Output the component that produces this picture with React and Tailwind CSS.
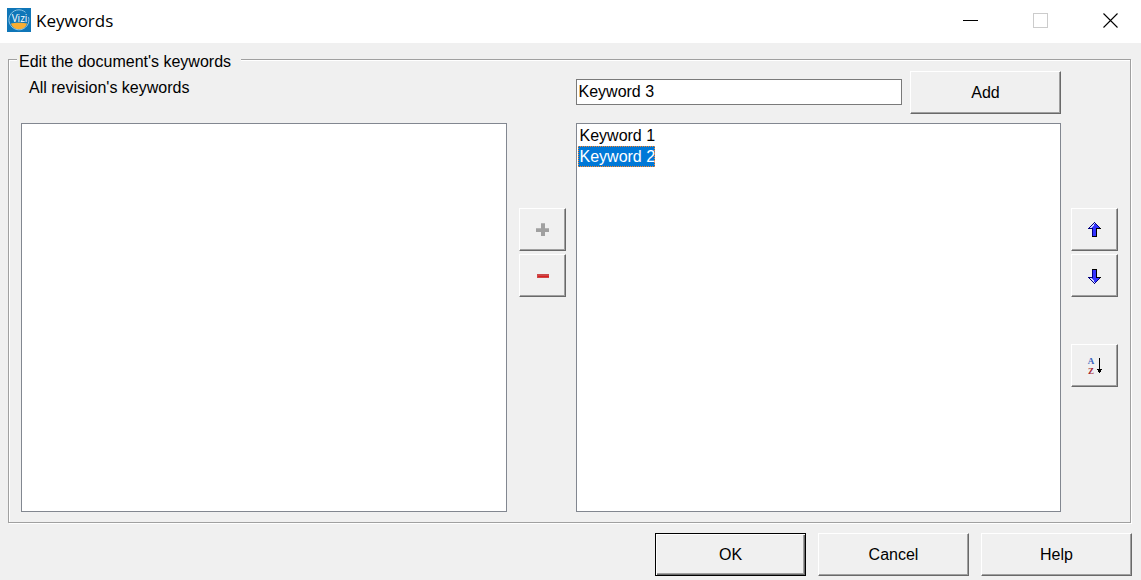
import React, { useState } from 'react';
import clsx from 'clsx';

const AppLogo = () => (
  <svg className="w-6 h-6 shrink-0" viewBox="0 0 24 24" aria-hidden="true">
    <rect width="24" height="24" fill="#0f76b8" />
    <path d="M4 15.500C7 14.600 17 14.600 20 15.500C18.800 19.500 15.500 21.500 12.300 21.500C8.500 21.500 5.200 19.500 4 15.500Z" fill="#f9ae33" />
    <path d="M21.500 9A10 10 0 1 1 18.500 4.300" fill="none" stroke="#8cc4e4" strokeWidth="1" />
    <text x="12.500" y="13.500" textAnchor="middle" fontSize="10" fill="#fff" fontFamily="Open Sans, sans-serif">Vizi</text>
  </svg>
);

const MinimizeIcon = () => (
  <svg className="w-4 h-4" viewBox="0 0 16 16" shapeRendering="crispEdges" aria-hidden="true">
    <rect x="0" y="8" width="15" height="1" fill="#000" />
  </svg>
);

const MaximizeIcon = () => (
  <svg className="w-4 h-4" viewBox="0 0 16 16" shapeRendering="crispEdges" aria-hidden="true">
    <rect x="0.5" y="1.5" width="14" height="14" fill="none" stroke="#ccc" />
  </svg>
);

const CloseIcon = () => (
  <svg className="w-4 h-4" viewBox="0 0 16 16" aria-hidden="true">
    <path d="M0.500 1.500L14.500 15.500M14.500 1.500L0.500 15.500" stroke="#000" strokeWidth="1.100" />
  </svg>
);

const PlusIcon = () => (
  <svg className="w-4 h-4" viewBox="0 0 16 16" shapeRendering="crispEdges" aria-hidden="true">
    <path d="M7 1h4v5h4v4h-4v4H7v-4H2V6h5z" fill="#a0a0a0" />
    <path d="M7 1h4v1H7zM2 6h5v1H2zM11 6h4v1h-4z" fill="#b4b4b4" />
  </svg>
);

const MinusIcon = () => (
  <svg className="w-4 h-4" viewBox="0 0 16 16" shapeRendering="crispEdges" aria-hidden="true">
    <rect x="3" y="6" width="12" height="4" fill="#cc4848" />
    <rect x="4" y="8" width="11" height="1" fill="#dc1f1f" />
  </svg>
);

const ArrowIcon = ({ className }) => (
  <svg className={clsx('w-4 h-4', className)} viewBox="0 0 16 16" shapeRendering="crispEdges" aria-hidden="true">
    <path d="M7 0h1v1h1v1h1v1h1v1h1v1h1v1h1v1h-4v8H5V7H1V6h1V5h1V4h1V3h1V2h1V1h1z" fill="#000080" />
    <path d="M9 6h5v1h-4v8H5v-1h4z" fill="#000" />
    <path d="M7 1h1v1h1v1h1v1h1v1h1v1H9v8H6V6H3V5h1V4h1V3h1V2h1z" fill="#3333ff" />
    <path d="M7 1h1v1H7zM6 2h1v1H6zM5 3h2v1H5zM4 4h2v1H4zM3 5h2v1H3z" fill="#d0d8ff" />
  </svg>
);

const SortIcon = () => (
  <svg className="w-4 h-5" viewBox="0 0 16 20" aria-hidden="true">
    <text x="4" y="8" textAnchor="middle" fontSize="9" fontWeight="700" fill="#3b62bd" fontFamily="Liberation Serif, serif">A</text>
    <text x="4" y="18" textAnchor="middle" fontSize="9" fontWeight="700" fill="#a52a35" fontFamily="Liberation Serif, serif">Z</text>
    <path d="M12 2h1v11h2v1h-1v2h-1v1h-1v-1h-1v-2h-1v-1h2z" fill="#000" shapeRendering="crispEdges" />
  </svg>
);

const Button = ({ primary, className, children, ...props }) => (
  <button
    type="button"
    className={clsx(
      'flex items-center justify-center h-[43px] shrink-0 border bg-[#f0f0f0]',
      primary
        ? 'border-black shadow-[inset_1px_1px_0_#fff,inset_-1px_-1px_0_#696969,inset_-2px_-2px_0_#a0a0a0]'
        : 'border-t-white border-l-white border-r-[#696969] border-b-[#696969] shadow-[inset_-1px_-1px_0_#a0a0a0]',
      className
    )}
    {...props}
  >
    {children}
  </button>
);

const ListBox = ({ label, labelledBy, items, selected, onSelect }) => (
  <ul
    role="listbox"
    aria-label={label}
    aria-labelledby={labelledBy}
    className="flex flex-col items-start min-h-[389px] p-px border border-[#828790] bg-white"
  >
    {items.map((item) => (
      <li
        key={item}
        role="option"
        aria-selected={item === selected}
        onClick={() => onSelect(item)}
        className={clsx(
          'pl-0.5 leading-[21px] cursor-default',
          item === selected && 'bg-[#0078d7] text-white outline-1 -outline-offset-1 outline-dotted outline-[#ff8728]'
        )}
      >
        {item}
      </li>
    ))}
  </ul>
);

const App = () => {
  const [keyword, setKeyword] = useState('Keyword 3');
  const [keywords, setKeywords] = useState(['Keyword 1', 'Keyword 2']);
  const [selected, setSelected] = useState('Keyword 2');

  const addKeyword = () => {
    if (keyword && !keywords.includes(keyword)) {
      setKeywords([...keywords, keyword]);
    }
  };

  const removeKeyword = () => setKeywords(keywords.filter((k) => k !== selected));

  const moveKeyword = (step) => {
    const from = keywords.indexOf(selected);
    const to = from + step;
    if (from < 0 || to < 0 || to >= keywords.length) return;
    const next = [...keywords];
    [next[from], next[to]] = [next[to], next[from]];
    setKeywords(next);
  };

  return (
    <div className="min-h-screen bg-[#f0f0f0] text-black text-base font-['Liberation_Sans',Arial,sans-serif]">
      {/* Title bar */}
      <header className="flex items-center h-[43px] pl-[7px] pr-[22px] pb-[3px] bg-white">
        <AppLogo />
        <h1 className="ml-[5px] pt-0.5 text-[17px] leading-6 font-['Open_Sans',sans-serif]">Keywords</h1>
        <div className="flex gap-[54px] ml-auto">
          <button type="button" aria-label="Minimize"><MinimizeIcon /></button>
          <button type="button" aria-label="Maximize" disabled><MaximizeIcon /></button>
          <button type="button" aria-label="Close"><CloseIcon /></button>
        </div>
      </header>

      <main className="px-2 pt-1 pb-1">
        <fieldset className="min-w-0 mr-0.5 px-3 pb-2.5 border border-[#a0a0a0] shadow-[1px_1px_0_#fff,inset_1px_1px_0_#fff]">
          <legend className="-ml-1 pt-1.5 pl-0.5 pr-2.5 leading-[18px] bg-[#f0f0f0]">Edit the document's keywords</legend>

          <div className="grid grid-cols-[1fr_49px_1fr_47px] gap-x-2.5 gap-y-[9px]">
            <div id="revision-keywords" className="col-span-2 pl-2 pt-2 leading-[18px]">All revision's keywords</div>
            <div className="flex items-start gap-2">
              <input
                type="text"
                aria-label="Keyword"
                value={keyword}
                onChange={(e) => setKeyword(e.target.value)}
                className="grow min-w-0 h-[26px] mt-2 px-0.5 border border-[#7a7a7a] bg-white outline-none"
              />
              <Button className="w-[151px]" onClick={addKeyword}>Add</Button>
            </div>
            <div />

            <ListBox labelledBy="revision-keywords" items={[]} />
            <div className="flex flex-col gap-[3px] pl-0.5 pt-[85px]">
              <Button aria-label="Add to document" disabled><PlusIcon /></Button>
              <Button aria-label="Remove from document" onClick={removeKeyword}><MinusIcon /></Button>
            </div>
            <ListBox label="Document keywords" items={keywords} selected={selected} onSelect={setSelected} />
            <div className="flex flex-col gap-[3px] pt-[85px]">
              <Button aria-label="Move up" onClick={() => moveKeyword(-1)}><ArrowIcon /></Button>
              <Button aria-label="Move down" onClick={() => moveKeyword(1)}><ArrowIcon className="-scale-y-100" /></Button>
              <Button className="mt-11" aria-label="Sort" onClick={() => setKeywords([...keywords].sort())}><SortIcon /></Button>
            </div>
          </div>
        </fieldset>

        <footer className="flex justify-end gap-3 mt-2.5 mr-px">
          <Button primary className="w-[151px]">OK</Button>
          <Button className="w-[151px]">Cancel</Button>
          <Button className="w-[151px]">Help</Button>
        </footer>
      </main>
    </div>
  );
};

export default App;
